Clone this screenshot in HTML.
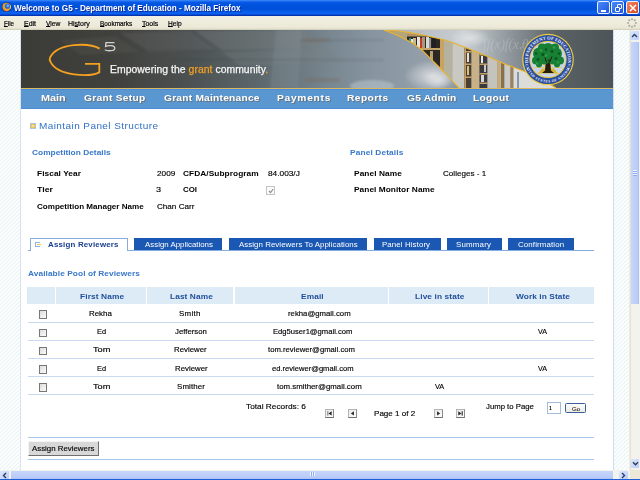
<!DOCTYPE html>
<html><head><meta charset="utf-8"><title>Welcome to G5 - Department of Education</title>
<style>
*{margin:0;padding:0;box-sizing:border-box}
html,body{width:640px;height:480px;overflow:hidden;background:#fff;font-family:"Liberation Sans",sans-serif}
.a{position:absolute}
.t{position:absolute;white-space:pre;transform-origin:0 0;font-family:"Liberation Sans",sans-serif}
#title{left:0;top:0;width:640px;height:16px;background:linear-gradient(#3d8bf7 0,#2a76f4 1px,#0a5ae6 2px,#0054e0 4px,#0050d8 9px,#0a5eec 12px,#0a62f0 14px,#0838b8 15px,#0030a8 16px)}
#menu{left:0;top:16px;width:640px;height:14px;background:linear-gradient(#f2f0e4,#ece9d8 11px,#e2dfcc 13px,#c8c4b0 14px)}
.hatch{background:#fff repeating-linear-gradient(135deg,#fdfefe 0,#fdfefe 1.2px,#eaf3f4 1.7px,#eaf3f4 2.2px,#fdfefe 2.83px)}
#lh{left:0;top:30px;width:21px;height:440px;border-right:1px solid #d8e2f4}
#rh{left:613px;top:30px;width:17px;height:440px;border-left:1px solid #d0dcf2;border-right:1px solid #efece0}
#vs{left:630px;top:30px;width:10px;height:440px;background:#f3f2ec;border-left:1px solid #e6e3d6}
#hs{left:0;top:470px;width:640px;height:10px;background:#f3f2ec}
.sbtn{position:absolute;background:linear-gradient(135deg,#dbe6fd,#bccffa);border-radius:1px}
.thumbv{position:absolute;background:linear-gradient(90deg,#c6d5fc,#b8cbf8 80%,#aac0f2)}
.thumbh{position:absolute;background:linear-gradient(#c6d5fc,#b8cbf8 80%,#aac0f2)}
#gold{left:21px;top:88px;width:592px;height:1px;background:#d8b862}
#nav{left:21px;top:89px;width:592px;height:20px;background:linear-gradient(#3d87e0 0,#5a96d0 1.2px,#5a96d0 19px,#3f80d0 20px)}
.tab{position:absolute;top:238.3px;height:11.7px;background:#1a58b3}
.hc{position:absolute;top:287px;height:17px;background:#ddebf7}
.rl{position:absolute;left:28px;width:566px;height:1px;background:#c9daf0}
.cb{position:absolute;left:38.7px;width:8.5px;height:8.5px;border:1px solid #777;background:linear-gradient(135deg,#dcdcd8,#fbfbfb)}
.pb{position:absolute;top:409.2px;width:9px;height:8.7px;border:1px solid #b4b4b4;border-bottom-color:#707070;border-right-color:#8a8a8a;background:linear-gradient(135deg,#e8e8e6,#fdfdfd)}
.wb{position:absolute;top:1px;width:13px;height:13px;border:1px solid #e8f0ff;border-radius:2px}
</style></head><body>
<div id="title" class="a"></div>
<!-- firefox icon -->
<svg class="a" style="left:1px;top:2px" width="11" height="10" viewBox="0 0 11 10">
<circle cx="5.6" cy="5" r="4.8" fill="#0a2a7a"/>
<circle cx="5.6" cy="5" r="4.2" fill="#f0a020"/>
<circle cx="6.4" cy="4.2" r="2.6" fill="#2a6ad0"/>
<circle cx="6.8" cy="3.8" r="1.3" fill="#6ab0f8"/>
<path d="M9.2,2.2 C10.2,3.6 10.2,5.8 9.3,7.3 C8.8,6.5 9.2,4 9.2,2.2 Z" fill="#f8e040"/>
<path d="M2,7.4 C3,8.8 5,9.6 7,9.1 C5.2,9.2 3.4,8.6 2,7.4 Z" fill="#d83a18"/>
<path d="M1.6,2.6 L2.6,1.2 L3.2,2.4 Z" fill="#f8b030"/>
</svg>
<div class="wb" style="left:597px;background:linear-gradient(135deg,#4a8af8,#1c56e0)"><div class="a" style="left:3px;top:8px;width:5px;height:2px;background:#fff"></div></div>
<div class="wb" style="left:611px;background:linear-gradient(135deg,#4a8af8,#1c56e0)"><div class="a" style="left:5px;top:2px;width:5px;height:5px;border:1px solid #fff;border-top-width:1.5px;border-radius:1px"></div><div class="a" style="left:2.5px;top:4.5px;width:5.5px;height:5px;border:1px solid #fff;border-top-width:1.5px;background:#2a64e8;border-radius:1px"></div></div>
<div class="wb" style="left:626px;width:13px;background:linear-gradient(135deg,#f08a64,#d8441c)"><svg class="a" style="left:1px;top:1px" width="10" height="10"><path d="M2,2 L8,8 M8,2 L2,8" stroke="#fff" stroke-width="1.6"/></svg></div>
<div id="menu" class="a"></div>
<!-- throbber -->
<svg class="a" style="left:627px;top:18px" width="10" height="10" viewBox="0 0 10 10"><g fill="#a8a8a0"><circle cx="5" cy="1.2" r="1"/><circle cx="7.7" cy="2.3" r="1"/><circle cx="8.8" cy="5" r="1"/><circle cx="7.7" cy="7.7" r="1"/><circle cx="5" cy="8.8" r="1"/><circle cx="2.3" cy="7.7" r="1"/><circle cx="1.2" cy="5" r="1"/><circle cx="2.3" cy="2.3" r="1"/></g></svg>
<div id="lh" class="a hatch"></div>
<div id="rh" class="a hatch"></div>
<div id="vs" class="a"></div>
<div class="sbtn" style="left:630px;top:31px;width:9px;height:9px"><svg class="a" style="left:1px;top:2px" width="7" height="5"><path d="M1,4 L3.5,1.5 L6,4" fill="none" stroke="#2c3c5c" stroke-width="1.4"/></svg></div>
<div class="thumbv" style="left:630.5px;top:42px;width:8px;height:262px"></div>
<div class="a" style="left:632.5px;top:170px;width:4px;height:6px;background:repeating-linear-gradient(#eef3ff 0,#eef3ff 1px,#8eaaf0 1px,#8eaaf0 2px)"></div>
<div class="sbtn" style="left:630.5px;top:459px;width:8px;height:9px"><svg class="a" style="left:1px;top:2px" width="7" height="5"><path d="M1,1.2 L3.5,3.7 L6,1.2" fill="none" stroke="#2c3c5c" stroke-width="1.4"/></svg></div>
<div id="hs" class="a"></div>
<div class="sbtn" style="left:0;top:470.5px;width:9.4px;height:8px"><svg class="a" style="left:2px;top:1px" width="5" height="7"><path d="M4,1 L1.5,3.5 L4,6" fill="none" stroke="#2c3c5c" stroke-width="1.4"/></svg></div>
<div class="thumbh" style="left:11px;top:470.5px;width:602px;height:8px"></div>
<div class="a" style="left:310px;top:472px;width:5px;height:4px;background:repeating-linear-gradient(90deg,#eef3ff 0,#eef3ff 1px,#8eaaf0 1px,#8eaaf0 2px)"></div>
<div class="sbtn" style="left:619px;top:470.5px;width:9px;height:8px"><svg class="a" style="left:2px;top:1px" width="5" height="7"><path d="M1,1 L3.5,3.5 L1,6" fill="none" stroke="#2c3c5c" stroke-width="1.4"/></svg></div>
<div class="a" style="left:629.5px;top:470px;width:10.5px;height:9px;background:#ece9d8"></div>
<div class="a" style="left:0;top:478.7px;width:640px;height:1.3px;background:#1f5fd8"></div>
<svg class="a" style="left:21px;top:30px" width="592" height="58" viewBox="0 0 592 58">
<defs>
<linearGradient id="bg" x1="0" x2="1" y1="0" y2="0">
<stop offset="0" stop-color="#3b3b37"/><stop offset="0.15" stop-color="#40403c"/><stop offset="0.28" stop-color="#4b5050"/><stop offset="0.4" stop-color="#5c676c"/>
<stop offset="0.52" stop-color="#788690"/><stop offset="0.6" stop-color="#8896a1"/><stop offset="0.7" stop-color="#96a0aa"/><stop offset="1" stop-color="#555b5e"/>
</linearGradient>
<linearGradient id="cl" gradientUnits="userSpaceOnUse" x1="363" x2="592" y1="0" y2="0">
<stop offset="0" stop-color="#a9b2ba"/><stop offset="0.35" stop-color="#c9ced2"/><stop offset="0.55" stop-color="#8f979c"/><stop offset="0.75" stop-color="#5a6266"/><stop offset="1" stop-color="#4d5458"/>
</linearGradient>
<radialGradient id="lg" cx="0.5" cy="0.5" r="0.5"><stop offset="0" stop-color="#dfe2e4" stop-opacity=".9"/><stop offset="1" stop-color="#dfe2e4" stop-opacity="0"/></radialGradient>
<filter id="bl" x="-20%" y="-50%" width="140%" height="200%"><feGaussianBlur stdDeviation="2.5"/></filter>
<clipPath id="lensc"><path d="M363.0,0.0 375.0,0.8 387.8,2.4 404.0,5.5 424.0,10.0 439.0,15.5 455.7,22.0 469.0,27.5 482.0,33.3 503.0,41.3 519.0,48.0 535.0,58.0 L438.0,58.0 431.0,50.5 425.0,44.0 417.0,36.0 409.6,28.6 401.0,20.0 392.0,13.3 377.0,5.5 363.0,0.0 Z"/></clipPath>
</defs>
<rect width="592" height="58" fill="url(#bg)"/>
<filter id="bl1" x="-20%" y="-50%" width="140%" height="200%"><feGaussianBlur stdDeviation="1.2"/></filter>
<g filter="url(#bl1)">
<polygon points="174.0,1.0 284.0,1.0 304.0,17.0 201.0,20.0" fill="#7a7e7c" opacity=".35"/>
<polygon points="99.0,3.0 169.0,1.0 194.0,20.0 129.0,22.0" fill="#6a6e6c" opacity=".25"/>
<polygon points="201.0,22.0 307.0,19.0 324.0,32.0 219.0,36.0" fill="#7a8080" opacity=".3"/>
<polygon points="39.0,10.0 94.0,6.0 119.0,22.0 59.0,25.0" fill="#5a5c58" opacity=".25"/>
<polygon points="255.0,0.0 281.0,0.0 277.0,58.0 249.0,58.0" fill="#8a98a0" opacity=".25"/>
<ellipse cx="351" cy="56" rx="22" ry="6" fill="#c8d0d8" opacity=".45"/>
</g>
<g stroke="#2a3036" stroke-width="1.2" opacity=".2" fill="none" filter="url(#bl1)"><path d="M149,29.5 L363,30"/><path d="M279,10.5 L363,10"/><path d="M129,20 L194,21"/></g>
<g fill="#7a6048" opacity=".25" filter="url(#bl1)"><rect x="284" y="8" width="25" height="4"/><rect x="284" y="48" width="35" height="4"/></g>
<polygon points="363.0,0.0 375.0,0.8 387.8,2.4 404.0,5.5 424.0,10.0 439.0,15.5 455.7,22.0 469.0,27.5 482.0,33.3 503.0,41.3 519.0,48.0 535.0,58.0 592.0,58.0 592.0,0.0" fill="url(#cl)"/>
<ellipse cx="411" cy="46" rx="28" ry="16" fill="url(#lg)"/><ellipse cx="417" cy="50" rx="14" ry="9" fill="url(#lg)"/>
<ellipse cx="449" cy="8" rx="20" ry="9" fill="url(#lg)"/>
<text x="462" y="18.5" font-family="Liberation Serif" font-style="italic" font-size="14" fill="#d0d6da" opacity=".35" letter-spacing="-.3">&#8747;f(x)f(x,&#952;)</text>
<g clip-path="url(#lensc)">
<rect x="363" y="0" width="60" height="58" fill="#b4a47c"/>
<rect x="386" y="5" width="34" height="53" fill="#2c2824"/>
<rect x="386" y="4" width="34" height="2.5" fill="#b09464"/>
<rect x="388" y="8" width="2" height="10" fill="#3a8a8a"/>
<rect x="390" y="9" width="2" height="9" fill="#e8e8e0"/>
<rect x="392" y="8" width="3" height="10" fill="#c8b890"/>
<rect x="396" y="7" width="3" height="11" fill="#e4e4e4"/>
<rect x="399" y="8" width="2" height="10" fill="#c83828"/>
<rect x="401" y="7" width="3" height="11" fill="#a89878"/>
<rect x="405" y="7" width="3" height="11" fill="#d8d8d8"/>
<rect x="408" y="8" width="2" height="10" fill="#909090"/>
<rect x="411" y="8" width="4" height="10" fill="#1e2024"/>
<rect x="386" y="18" width="34" height="2" fill="#c4a464"/>
<rect x="409" y="21" width="3" height="10" fill="#b8a070"/>
<rect x="419" y="0" width="4" height="58" fill="#c8a262"/>
<rect x="423" y="0" width="8.5" height="58" fill="#b6b2a0"/>
<rect x="431.5" y="0" width="12" height="58" fill="#c9c9c1"/>
<rect x="443.5" y="0" width="7" height="58" fill="#4a4034"/>
<rect x="443.5" y="0" width="1.5" height="58" fill="#c09a60"/>
<rect x="446" y="23" width="2" height="9" fill="#e0e0e0"/>
<rect x="446" y="36" width="2" height="9" fill="#d8c070"/>
<rect x="443.5" y="21" width="7" height="1.5" fill="#c8a468"/>
<rect x="443.5" y="33.5" width="7" height="1.5" fill="#c8a468"/>
<rect x="443.5" y="46.5" width="7" height="1.5" fill="#c8a468"/>
<rect x="450.5" y="0" width="8" height="58" fill="#c8b088"/>
<rect x="458.5" y="0" width="8" height="58" fill="#3c3a3c"/>
<rect x="460" y="26" width="2" height="7" fill="#e8e8e8"/>
<rect x="463" y="35" width="2" height="7" fill="#c8c8c8"/>
<rect x="460" y="45" width="3" height="7" fill="#d8d8d8"/>
<rect x="458.5" y="24" width="8" height="1.5" fill="#c0a064"/>
<rect x="458.5" y="33.5" width="8" height="1.5" fill="#c0a064"/>
<rect x="458.5" y="43" width="8" height="1.5" fill="#c0a064"/>
<rect x="458.5" y="52.5" width="8" height="1.5" fill="#c0a064"/>
<rect x="466.5" y="0" width="10" height="58" fill="#c4c4bc"/>
<rect x="476.5" y="0" width="3" height="58" fill="#c8aa78"/>
<rect x="479.5" y="0" width="4" height="58" fill="#d6d4cc"/>
<rect x="480" y="33" width="3.5" height="25" fill="#8a7048"/>
<rect x="483.5" y="0" width="6" height="58" fill="#cacac6"/>
<rect x="489.5" y="36" width="3" height="22" fill="#a08058"/>
<rect x="492.5" y="0" width="50" height="58" fill="#dcdcd8"/>
<rect x="496" y="42" width="2" height="16" fill="#8898b0"/>
</g>
<polyline points="363.0,0.0 375.0,0.8 387.8,2.4 404.0,5.5 424.0,10.0 439.0,15.5 455.7,22.0 469.0,27.5 482.0,33.3 503.0,41.3 519.0,48.0 535.0,58.0" fill="none" stroke="#eab42c" stroke-width="1.1"/>
<polyline points="363.0,0.0 377.0,5.5 392.0,13.3 401.0,20.0 409.6,28.6 417.0,36.0 425.0,44.0 431.0,50.5 438.0,58.0" fill="none" stroke="#eab42c" stroke-width="1.1"/>
<path d="M78.6,18.6 C68,12.600000000000001 37,12.600000000000001 29.200000000000003,27.200000000000003 C28.4,28.799999999999997 28.5,30.200000000000003 29.5,31.799999999999997 C37,46.5 69,47 78.3,42.3 L78.3,33.8 L64,33.8" fill="none" stroke="#f4a020" stroke-width="1.85"/>
<path d="M93.5,12.600000000000001 L85,12.600000000000001 L84.6,16.4 C87,15.200000000000003 93.8,15 93.8,18.200000000000003 C93.8,21.5 86,21 83.8,19.799999999999997" fill="none" stroke="#d2d2d2" stroke-width="1.3"/>
<!-- seal -->
<g transform="translate(527,29.5)">
<circle r="25.8" fill="#eccb3c"/>
<circle r="24.6" fill="#2a4c9e"/>
<g font-family="Liberation Serif" font-weight="bold" fill="#eef2fa"><text transform="rotate(-95.3) translate(0,-19.90)" text-anchor="middle" font-size="4.6">D</text><text transform="rotate(-86.1) translate(0,-19.90)" text-anchor="middle" font-size="4.6">E</text><text transform="rotate(-77.6) translate(0,-19.90)" text-anchor="middle" font-size="4.6">P</text><text transform="rotate(-68.8) translate(0,-19.90)" text-anchor="middle" font-size="4.6">A</text><text transform="rotate(-59.2) translate(0,-19.90)" text-anchor="middle" font-size="4.6">R</text><text transform="rotate(-50.0) translate(0,-19.90)" text-anchor="middle" font-size="4.6">T</text><text transform="rotate(-39.4) translate(0,-19.90)" text-anchor="middle" font-size="4.6">M</text><text transform="rotate(-28.7) translate(0,-19.90)" text-anchor="middle" font-size="4.6">E</text><text transform="rotate(-19.5) translate(0,-19.90)" text-anchor="middle" font-size="4.6">N</text><text transform="rotate(-10.3) translate(0,-19.90)" text-anchor="middle" font-size="4.6">T</text><text transform="rotate(2.6) translate(0,-19.90)" text-anchor="middle" font-size="4.6">O</text><text transform="rotate(11.8) translate(0,-19.90)" text-anchor="middle" font-size="4.6">F</text><text transform="rotate(23.5) translate(0,-19.90)" text-anchor="middle" font-size="4.6">E</text><text transform="rotate(32.7) translate(0,-19.90)" text-anchor="middle" font-size="4.6">D</text><text transform="rotate(42.3) translate(0,-19.90)" text-anchor="middle" font-size="4.6">U</text><text transform="rotate(51.9) translate(0,-19.90)" text-anchor="middle" font-size="4.6">C</text><text transform="rotate(61.4) translate(0,-19.90)" text-anchor="middle" font-size="4.6">A</text><text transform="rotate(70.6) translate(0,-19.90)" text-anchor="middle" font-size="4.6">T</text><text transform="rotate(77.6) translate(0,-19.90)" text-anchor="middle" font-size="4.6">I</text><text transform="rotate(85.4) translate(0,-19.90)" text-anchor="middle" font-size="4.6">O</text><text transform="rotate(95.3) translate(0,-19.90)" text-anchor="middle" font-size="4.6">N</text><text transform="rotate(75.0) translate(0,23.10)" text-anchor="middle" font-size="3.6">U</text><text transform="rotate(67.3) translate(0,23.10)" text-anchor="middle" font-size="3.6">N</text><text transform="rotate(61.3) translate(0,23.10)" text-anchor="middle" font-size="3.6">I</text><text transform="rotate(55.7) translate(0,23.10)" text-anchor="middle" font-size="3.6">T</text><text transform="rotate(48.5) translate(0,23.10)" text-anchor="middle" font-size="3.6">E</text><text transform="rotate(41.1) translate(0,23.10)" text-anchor="middle" font-size="3.6">D</text><text transform="rotate(31.6) translate(0,23.10)" text-anchor="middle" font-size="3.6">S</text><text transform="rotate(25.1) translate(0,23.10)" text-anchor="middle" font-size="3.6">T</text><text transform="rotate(17.7) translate(0,23.10)" text-anchor="middle" font-size="3.6">A</text><text transform="rotate(10.2) translate(0,23.10)" text-anchor="middle" font-size="3.6">T</text><text transform="rotate(3.1) translate(0,23.10)" text-anchor="middle" font-size="3.6">E</text><text transform="rotate(-3.4) translate(0,23.10)" text-anchor="middle" font-size="3.6">S</text><text transform="rotate(-13.2) translate(0,23.10)" text-anchor="middle" font-size="3.6">O</text><text transform="rotate(-20.6) translate(0,23.10)" text-anchor="middle" font-size="3.6">F</text><text transform="rotate(-30.4) translate(0,23.10)" text-anchor="middle" font-size="3.6">A</text><text transform="rotate(-39.3) translate(0,23.10)" text-anchor="middle" font-size="3.6">M</text><text transform="rotate(-48.0) translate(0,23.10)" text-anchor="middle" font-size="3.6">E</text><text transform="rotate(-55.4) translate(0,23.10)" text-anchor="middle" font-size="3.6">R</text><text transform="rotate(-61.3) translate(0,23.10)" text-anchor="middle" font-size="3.6">I</text><text transform="rotate(-67.3) translate(0,23.10)" text-anchor="middle" font-size="3.6">C</text><text transform="rotate(-75.0) translate(0,23.10)" text-anchor="middle" font-size="3.6">A</text></g>
<circle cx="-20.5" cy="9.5" r=".8" fill="#fff"/><circle cx="20.5" cy="9.5" r=".8" fill="#fff"/>
<circle r="18.6" fill="#eccb3c"/>
<circle r="17.6" fill="#c6d3ec"/>
<g stroke="#e8cc50" stroke-width="1.2" opacity=".8"><path d="M0,8 L-16,-2 M0,8 L16,-2 M0,8 L-14,8 M0,8 L14,8 M0,8 L-10,14 M0,8 L10,14"/></g>
<path d="M-10,14 L10,14 L6,9 L-6,9 Z" fill="#d8b830"/>
<path d="M-2.2,2 L2.2,2 L3,11 L6,13.5 L-6,13.5 L-3,11 Z" fill="#2a1c0c"/>
<g fill="#178034">
<circle cx="-9" cy="-6" r="6"/><circle cx="8" cy="-6" r="6"/><circle cx="0" cy="-11" r="5.5"/>
<circle cx="-4" cy="-1" r="6"/><circle cx="5" cy="-1" r="6"/><circle cx="-12" cy="1" r="4"/><circle cx="12" cy="1" r="4"/>
<circle cx="-6" cy="-12" r="4"/><circle cx="7" cy="-12" r="4"/><circle cx="-9" cy="5" r="3"/><circle cx="9" cy="5" r="3"/>
</g>
<g fill="#0a4a1c" opacity=".8"><circle cx="-5" cy="-5" r="1.6"/><circle cx="4" cy="-8" r="1.4"/><circle cx="8" cy="-1" r="1.5"/><circle cx="-10" cy="0" r="1.4"/><circle cx="1" cy="1" r="1.6"/><circle cx="-2" cy="-10" r="1.2"/><circle cx="11" cy="-6" r="1.2"/><circle cx="-12" cy="-6" r="1.2"/></g>
<g fill="#40b050" opacity=".7"><circle cx="-7" cy="-9" r="1.3"/><circle cx="6" cy="-12" r="1.2"/><circle cx="-2" cy="-4" r="1.2"/><circle cx="10" cy="3" r="1.1"/><circle cx="-11" cy="4" r="1"/></g>
<path d="M-1.5,3 L-3,-2 M1.5,3 L4,-3" stroke="#2a1a08" stroke-width="1"/>
</g>
</svg>
<div id="gold" class="a"></div>
<div id="nav" class="a"></div>
<!-- title icon -->
<div class="a" style="left:30px;top:123px;width:6px;height:6px;background:radial-gradient(#fff6c8 0,#f2c43a 60%);border:1px solid #a8c4ea"></div>
<div class="a" style="left:266px;top:186px;width:9px;height:9px;border:1px solid #c4c4c0;background:#fbfbfa"><svg class="a" style="left:1px;top:1px" width="6" height="6"><path d="M1,3 L2.5,4.6 L5.2,1.2" fill="none" stroke="#8e8e8a" stroke-width="1.1"/></svg></div>
<!-- tabs -->
<div class="a" style="left:28px;top:250px;width:566px;height:1px;background:#86ace0"></div>
<div class="a" style="left:30px;top:238px;width:98px;height:13px;background:#fff;border:1px solid #86ace0;border-bottom:none"></div>
<div class="a" style="left:35px;top:242px;width:4.5px;height:4.8px;border:1px solid #8cb4e6;border-right:none"></div><div class="a" style="left:37px;top:244.2px;width:4px;height:1.2px;background:#f2c63a"></div>
<div class="tab" style="left:134px;width:88px"></div>
<div class="tab" style="left:229px;width:138px"></div>
<div class="tab" style="left:374px;width:67px"></div>
<div class="tab" style="left:447px;width:55px"></div>
<div class="tab" style="left:508px;width:66px"></div>
<!-- table header -->
<div class="hc" style="left:27.3px;width:27.7px"></div>
<div class="hc" style="left:56px;width:90px"></div>
<div class="hc" style="left:147px;width:86px"></div>
<div class="hc" style="left:235px;width:153px"></div>
<div class="hc" style="left:389px;width:99px"></div>
<div class="hc" style="left:489px;width:105px"></div>
<div class="rl" style="top:322px"></div>
<div class="rl" style="top:340px"></div>
<div class="rl" style="top:358px"></div>
<div class="rl" style="top:376px"></div>
<div class="rl" style="top:394px"></div>
<div class="cb" style="top:310.3px"></div>
<div class="cb" style="top:328.6px"></div>
<div class="cb" style="top:346.8px"></div>
<div class="cb" style="top:365px"></div>
<div class="cb" style="top:383.2px"></div>
<div class="pb" style="left:325.4px"><svg class="a" style="left:0;top:0" width="7" height="7"><rect x="1.2" y="1.2" width="1.2" height="4.4" fill="#8a8a8a"/><path d="M5.6,1.2 L2.5,3.4 L5.6,5.6 Z" fill="#222"/></svg></div>
<div class="pb" style="left:348.2px"><svg class="a" style="left:0;top:0" width="7" height="7"><path d="M4.9,1.2 L1.9,3.4 L4.9,5.6 Z" fill="#222"/></svg></div>
<div class="pb" style="left:433.5px"><svg class="a" style="left:0;top:0" width="7" height="7"><path d="M2.1,1.2 L5.1,3.4 L2.1,5.6 Z" fill="#222"/></svg></div>
<div class="pb" style="left:456px"><svg class="a" style="left:0;top:0" width="7" height="7"><path d="M1.3,1.2 L4.4,3.4 L1.3,5.6 Z" fill="#222"/><rect x="4.6" y="1.2" width="1.2" height="4.4" fill="#333"/></svg></div>
<div class="a" style="left:547.4px;top:402.4px;width:14px;height:11.2px;border:1px solid #a4bcdc;background:#fff"></div>
<div class="a" style="left:565.2px;top:403.4px;width:20.8px;height:9.2px;border:1px solid #3a5f98;border-radius:1.5px;background:linear-gradient(#fdfdfb,#eceae0)"></div>
<div class="a" style="left:28px;top:437px;width:566px;height:1px;background:#a9c6ec"></div>
<div class="a" style="left:28px;top:441px;width:71px;height:15px;background:#d8d8d8;border:1px solid;border-color:#f4f4f4 #6f6f6f #6f6f6f #f4f4f4"></div>
<div class="a" style="left:28px;top:459px;width:566px;height:1px;background:#a9c6ec"></div>
<div class="t" style="left:13.90px;top:4.20px;font-size:8.7px;line-height:8.7px;font-weight:bold;color:#fff;transform:scaleX(0.9373);letter-spacing:0.000px;text-shadow:1px 1px 0 #0a2a9a;">Welcome to G5 - Department of Education - Mozilla Firefox</div>
<div class="t" style="left:4.18px;top:20.00px;font-size:7.6px;line-height:7.6px;color:#000;transform:scaleX(0.8182);letter-spacing:0.000px;-webkit-text-stroke:0.2px #000;"><span style="text-decoration:underline;text-underline-offset:0px;text-decoration-thickness:1px">F</span>ile</div>
<div class="t" style="left:24.08px;top:20.00px;font-size:7.6px;line-height:7.6px;color:#000;transform:scaleX(0.9167);letter-spacing:0.000px;-webkit-text-stroke:0.2px #000;"><span style="text-decoration:underline;text-underline-offset:0px;text-decoration-thickness:1px">E</span>dit</div>
<div class="t" style="left:45.60px;top:20.00px;font-size:7.6px;line-height:7.6px;color:#000;transform:scaleX(0.8844);letter-spacing:0.000px;-webkit-text-stroke:0.2px #000;"><span style="text-decoration:underline;text-underline-offset:0px;text-decoration-thickness:1px">V</span>iew</div>
<div class="t" style="left:68.48px;top:20.00px;font-size:7.6px;line-height:7.6px;color:#000;transform:scaleX(0.9217);letter-spacing:0.000px;-webkit-text-stroke:0.2px #000;">Hi<span style="text-decoration:underline;text-underline-offset:0px;text-decoration-thickness:1px">s</span>tory</div>
<div class="t" style="left:100.15px;top:20.00px;font-size:7.6px;line-height:7.6px;color:#000;transform:scaleX(0.8459);letter-spacing:0.000px;-webkit-text-stroke:0.2px #000;"><span style="text-decoration:underline;text-underline-offset:0px;text-decoration-thickness:1px">B</span>ookmarks</div>
<div class="t" style="left:142.38px;top:20.00px;font-size:7.6px;line-height:7.6px;color:#000;transform:scaleX(0.9187);letter-spacing:0.000px;-webkit-text-stroke:0.2px #000;"><span style="text-decoration:underline;text-underline-offset:0px;text-decoration-thickness:1px">T</span>ools</div>
<div class="t" style="left:167.53px;top:20.00px;font-size:7.6px;line-height:7.6px;color:#000;transform:scaleX(0.8733);letter-spacing:0.000px;-webkit-text-stroke:0.2px #000;"><span style="text-decoration:underline;text-underline-offset:0px;text-decoration-thickness:1px">H</span>elp</div>
<div class="t" style="left:110.21px;top:65.00px;font-size:10px;line-height:10px;color:#f6f6f6;transform:scaleX(1.0400);letter-spacing:0.035px;-webkit-text-stroke:0.25px;">Empowering the <span style="color:#f2a126">grant</span> community<span style="color:#f4a020">.</span></div>
<div class="t" style="left:40.64px;top:93.40px;font-size:9.8px;line-height:9.8px;font-weight:bold;color:#fff;transform:scaleX(1.1071);letter-spacing:0.000px;text-shadow:1px 1px 0 rgba(110,80,40,.5);">Main</div>
<div class="t" style="left:83.90px;top:93.40px;font-size:9.8px;line-height:9.8px;font-weight:bold;color:#fff;transform:scaleX(1.0400);letter-spacing:0.275px;text-shadow:1px 1px 0 rgba(110,80,40,.5);">Grant Setup</div>
<div class="t" style="left:163.75px;top:93.40px;font-size:9.8px;line-height:9.8px;font-weight:bold;color:#fff;transform:scaleX(1.0400);letter-spacing:0.224px;text-shadow:1px 1px 0 rgba(110,80,40,.5);">Grant Maintenance</div>
<div class="t" style="left:276.76px;top:93.40px;font-size:9.8px;line-height:9.8px;font-weight:bold;color:#fff;transform:scaleX(1.0400);letter-spacing:0.714px;text-shadow:1px 1px 0 rgba(110,80,40,.5);">Payments</div>
<div class="t" style="left:346.96px;top:93.40px;font-size:9.8px;line-height:9.8px;font-weight:bold;color:#fff;transform:scaleX(1.0400);letter-spacing:0.410px;text-shadow:1px 1px 0 rgba(110,80,40,.5);">Reports</div>
<div class="t" style="left:406.70px;top:93.40px;font-size:9.8px;line-height:9.8px;font-weight:bold;color:#fff;transform:scaleX(1.0400);letter-spacing:0.201px;text-shadow:1px 1px 0 rgba(110,80,40,.5);">G5 Admin</div>
<div class="t" style="left:473.26px;top:93.40px;font-size:9.8px;line-height:9.8px;font-weight:bold;color:#fff;transform:scaleX(1.0400);letter-spacing:0.273px;text-shadow:1px 1px 0 rgba(110,80,40,.5);">Logout</div>
<div class="t" style="left:38.96px;top:121.30px;font-size:9.6px;line-height:9.6px;color:#2f70c6;transform:scaleX(1.0400);letter-spacing:0.411px;">Maintain Panel Structure</div>
<div class="t" style="left:32.00px;top:149.30px;font-size:8px;line-height:8px;font-weight:bold;color:#3878ca;transform:scaleX(1.0400);letter-spacing:0.027px;">Competition Details</div>
<div class="t" style="left:349.50px;top:149.20px;font-size:8px;line-height:8px;font-weight:bold;color:#3878ca;transform:scaleX(1.0400);letter-spacing:0.123px;">Panel Details</div>
<div class="t" style="left:37.00px;top:170.30px;font-size:8px;line-height:8px;font-weight:bold;color:#000;transform:scaleX(1.0400);letter-spacing:0.060px;">Fiscal Year</div>
<div class="t" style="left:37.00px;top:186.20px;font-size:8px;line-height:8px;font-weight:bold;color:#000;transform:scaleX(1.1000);letter-spacing:0.000px;">Tier</div>
<div class="t" style="left:37.00px;top:203.00px;font-size:8px;line-height:8px;font-weight:bold;color:#000;transform:scaleX(1.0086);letter-spacing:0.000px;">Competition Manager Name</div>
<div class="t" style="left:156.50px;top:170.30px;font-size:8px;line-height:8px;color:#000;transform:scaleX(1.0294);letter-spacing:0.000px;-webkit-text-stroke:0.15px #000;">2009</div>
<div class="t" style="left:156.17px;top:186.20px;font-size:8px;line-height:8px;color:#000;transform:scaleX(1.1333);letter-spacing:0.000px;-webkit-text-stroke:0.15px #000;">3</div>
<div class="t" style="left:156.50px;top:203.00px;font-size:8px;line-height:8px;color:#000;transform:scaleX(1.0135);letter-spacing:0.000px;-webkit-text-stroke:0.15px #000;">Chan Carr</div>
<div class="t" style="left:182.50px;top:170.30px;font-size:8px;line-height:8px;font-weight:bold;color:#000;transform:scaleX(1.0400);letter-spacing:0.056px;">CFDA/Subprogram</div>
<div class="t" style="left:182.50px;top:186.20px;font-size:8px;line-height:8px;font-weight:bold;color:#000;transform:scaleX(0.9857);letter-spacing:0.000px;">COI</div>
<div class="t" style="left:267.50px;top:170.30px;font-size:8px;line-height:8px;color:#000;transform:scaleX(1.0367);letter-spacing:-0.000px;-webkit-text-stroke:0.15px #000;">84.003/J</div>
<div class="t" style="left:353.75px;top:170.30px;font-size:8px;line-height:8px;font-weight:bold;color:#000;transform:scaleX(1.0400);letter-spacing:0.075px;">Panel Name</div>
<div class="t" style="left:442.50px;top:170.30px;font-size:8px;line-height:8px;color:#000;transform:scaleX(1.0119);letter-spacing:0.000px;-webkit-text-stroke:0.15px #000;">Colleges - 1</div>
<div class="t" style="left:353.75px;top:186.00px;font-size:8px;line-height:8px;font-weight:bold;color:#000;transform:scaleX(1.0400);letter-spacing:0.038px;">Panel Monitor Name</div>
<div class="t" style="left:47.50px;top:241.20px;font-size:7.6px;line-height:7.6px;font-weight:bold;color:#183f90;transform:scaleX(1.0400);letter-spacing:0.186px;">Assign Reviewers</div>
<div class="t" style="left:144.60px;top:241.20px;font-size:7.6px;line-height:7.6px;color:#fff;transform:scaleX(1.0385);letter-spacing:0.000px;">Assign Applications</div>
<div class="t" style="left:238.75px;top:241.20px;font-size:7.6px;line-height:7.6px;color:#fff;transform:scaleX(1.0400);letter-spacing:0.038px;">Assign Reviewers To Applications</div>
<div class="t" style="left:382.21px;top:241.20px;font-size:7.6px;line-height:7.6px;color:#fff;transform:scaleX(1.0400);letter-spacing:0.087px;">Panel History</div>
<div class="t" style="left:455.71px;top:241.20px;font-size:7.6px;line-height:7.6px;color:#fff;transform:scaleX(1.0400);letter-spacing:0.187px;">Summary</div>
<div class="t" style="left:518.20px;top:241.20px;font-size:7.6px;line-height:7.6px;color:#fff;transform:scaleX(1.0400);letter-spacing:0.112px;">Confirmation</div>
<div class="t" style="left:28.00px;top:270.30px;font-size:8px;line-height:8px;font-weight:bold;color:#3878ca;transform:scaleX(1.0400);letter-spacing:0.065px;">Available Pool of Reviewers</div>
<div class="t" style="left:80.00px;top:293.20px;font-size:8px;line-height:8px;font-weight:bold;color:#1f4e9a;transform:scaleX(1.0400);letter-spacing:0.119px;">First Name</div>
<div class="t" style="left:169.70px;top:293.20px;font-size:8px;line-height:8px;font-weight:bold;color:#1f4e9a;transform:scaleX(1.0400);letter-spacing:0.084px;">Last Name</div>
<div class="t" style="left:301.40px;top:293.20px;font-size:8px;line-height:8px;font-weight:bold;color:#1f4e9a;transform:scaleX(1.0400);letter-spacing:0.111px;">Email</div>
<div class="t" style="left:415.25px;top:293.20px;font-size:8px;line-height:8px;font-weight:bold;color:#1f4e9a;transform:scaleX(1.0400);letter-spacing:0.113px;">Live in state</div>
<div class="t" style="left:516.00px;top:293.20px;font-size:8px;line-height:8px;font-weight:bold;color:#1f4e9a;transform:scaleX(1.0400);letter-spacing:0.077px;">Work in State</div>
<div class="t" style="left:89.36px;top:310.30px;font-size:7.6px;line-height:7.6px;color:#000;transform:scaleX(1.0400);letter-spacing:0.014px;-webkit-text-stroke:0.15px #000;">Rekha</div>
<div class="t" style="left:178.96px;top:310.30px;font-size:7.6px;line-height:7.6px;color:#000;transform:scaleX(1.0400);letter-spacing:0.260px;-webkit-text-stroke:0.15px #000;">Smith</div>
<div class="t" style="left:287.70px;top:310.30px;font-size:7.6px;line-height:7.6px;color:#000;transform:scaleX(1.0213);letter-spacing:0.000px;-webkit-text-stroke:0.15px #000;">rekha@gmail.com</div>
<div class="t" style="left:97.03px;top:328.40px;font-size:7.6px;line-height:7.6px;color:#000;transform:scaleX(0.9750);letter-spacing:0.000px;-webkit-text-stroke:0.15px #000;">Ed</div>
<div class="t" style="left:175.30px;top:328.40px;font-size:7.6px;line-height:7.6px;color:#000;transform:scaleX(1.0226);letter-spacing:0.000px;-webkit-text-stroke:0.15px #000;">Jefferson</div>
<div class="t" style="left:272.50px;top:328.40px;font-size:7.6px;line-height:7.6px;color:#000;transform:scaleX(1.0038);letter-spacing:0.000px;-webkit-text-stroke:0.15px #000;">Edg5user1@gmail.com</div>
<div class="t" style="left:538.40px;top:328.40px;font-size:7.6px;line-height:7.6px;color:#000;transform:scaleX(0.9400);letter-spacing:0.000px;-webkit-text-stroke:0.15px #000;">VA</div>
<div class="t" style="left:93.09px;top:346.40px;font-size:7.6px;line-height:7.6px;color:#000;transform:scaleX(1.2077);letter-spacing:0.000px;-webkit-text-stroke:0.15px #000;">Tom</div>
<div class="t" style="left:174.27px;top:346.40px;font-size:7.6px;line-height:7.6px;color:#000;transform:scaleX(1.0300);letter-spacing:0.000px;-webkit-text-stroke:0.15px #000;">Reviewer</div>
<div class="t" style="left:268.40px;top:346.40px;font-size:7.6px;line-height:7.6px;color:#000;transform:scaleX(1.0141);letter-spacing:0.000px;-webkit-text-stroke:0.15px #000;">tom.reviewer@gmail.com</div>
<div class="t" style="left:97.03px;top:364.50px;font-size:7.6px;line-height:7.6px;color:#000;transform:scaleX(0.9750);letter-spacing:0.000px;-webkit-text-stroke:0.15px #000;">Ed</div>
<div class="t" style="left:175.07px;top:364.50px;font-size:7.6px;line-height:7.6px;color:#000;transform:scaleX(1.0300);letter-spacing:0.000px;-webkit-text-stroke:0.15px #000;">Reviewer</div>
<div class="t" style="left:272.20px;top:364.50px;font-size:7.6px;line-height:7.6px;color:#000;transform:scaleX(0.9988);letter-spacing:0.000px;-webkit-text-stroke:0.15px #000;">ed.reviewer@gmail.com</div>
<div class="t" style="left:538.40px;top:364.50px;font-size:7.6px;line-height:7.6px;color:#000;transform:scaleX(0.9400);letter-spacing:0.000px;-webkit-text-stroke:0.15px #000;">VA</div>
<div class="t" style="left:93.09px;top:382.60px;font-size:7.6px;line-height:7.6px;color:#000;transform:scaleX(1.2077);letter-spacing:0.000px;-webkit-text-stroke:0.15px #000;">Tom</div>
<div class="t" style="left:177.06px;top:382.60px;font-size:7.6px;line-height:7.6px;color:#000;transform:scaleX(1.0400);letter-spacing:0.112px;-webkit-text-stroke:0.15px #000;">Smither</div>
<div class="t" style="left:276.50px;top:382.60px;font-size:7.6px;line-height:7.6px;color:#000;transform:scaleX(1.0329);letter-spacing:0.000px;-webkit-text-stroke:0.15px #000;">tom.smither@gmail.com</div>
<div class="t" style="left:435.00px;top:382.60px;font-size:7.6px;line-height:7.6px;color:#000;transform:scaleX(0.9700);letter-spacing:0.000px;-webkit-text-stroke:0.15px #000;">VA</div>
<div class="t" style="left:245.56px;top:402.80px;font-size:8px;line-height:8px;color:#000;transform:scaleX(1.0375);letter-spacing:0.000px;-webkit-text-stroke:0.15px #000;">Total Records: 6</div>
<div class="t" style="left:373.99px;top:410.30px;font-size:8px;line-height:8px;color:#000;transform:scaleX(1.0075);letter-spacing:0.000px;-webkit-text-stroke:0.15px #000;">Page 1 of 2</div>
<div class="t" style="left:485.70px;top:403.40px;font-size:8px;line-height:8px;color:#000;transform:scaleX(0.9694);letter-spacing:0.000px;-webkit-text-stroke:0.15px #000;">Jump to Page</div>
<div class="t" style="left:548.90px;top:406.00px;font-size:5.4px;line-height:5.4px;font-weight:bold;color:#000;transform:scaleX(0.9000);letter-spacing:0.000px;">1</div>
<div class="t" style="left:572.00px;top:406.50px;font-size:5.6px;line-height:5.6px;color:#000;transform:scaleX(1.1143);letter-spacing:0.000px;-webkit-text-stroke:0;">Go</div>
<div class="t" style="left:32.20px;top:445.30px;font-size:8px;line-height:8px;color:#000;transform:scaleX(0.9825);letter-spacing:0.000px;-webkit-text-stroke:0.15px #000;">Assign Reviewers</div>
</body></html>
